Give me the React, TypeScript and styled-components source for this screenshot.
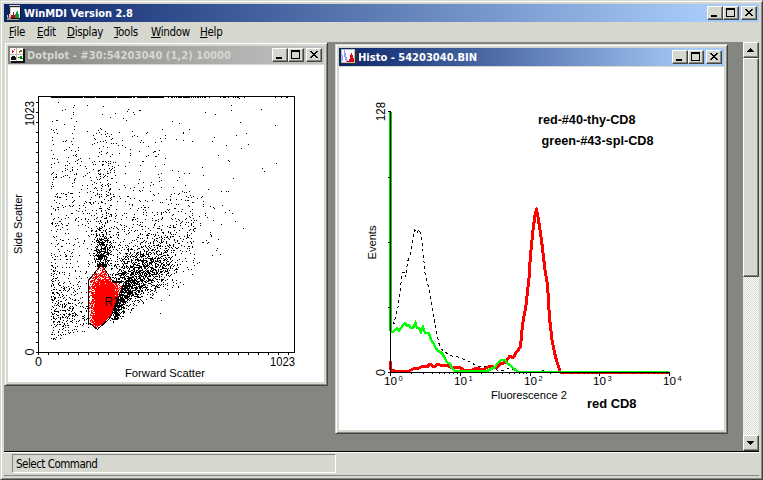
import React from "react";
import styled, { createGlobalStyle, css } from "styled-components";

const FACE = "#d6d7cf";
const SHADOW = "#848682";
const DARK = "#424542";

const GlobalStyle = createGlobalStyle`
  * { box-sizing: border-box; }
  body { margin: 0; background: ${FACE}; overflow: hidden; }
  svg { display: block; }
`;

const AppWindow = styled.div`
  width: 763px;
  height: 480px;
  display: flex;
  flex-direction: column;
  padding: 3px;
  background: ${FACE};
  border: 1px solid;
  border-color: ${FACE} ${DARK} ${DARK} ${FACE};
  box-shadow: inset 1px 1px #fff, inset -1px -1px ${SHADOW};
  font-family: "DejaVu Sans Condensed", "DejaVu Sans", sans-serif;
  font-size: 11px;
  color: #000;
`;

const TitleBar = styled.div<{ $inactive?: boolean }>`
  height: 18px;
  flex: none;
  display: flex;
  align-items: center;
  gap: 2px;
  padding: 0 2px;
  background: ${(p) =>
    p.$inactive
      ? "linear-gradient(90deg, #848482, #c3c3c3)"
      : "linear-gradient(90deg, #0a246a, #a6caf7 92%)"};
  color: ${(p) => (p.$inactive ? FACE : "#fff")};
`;

const TitleText = styled.svg`
  flex: 1;
  height: 18px;
  min-width: 0;
  font: bold 11px "DejaVu Sans Condensed", "DejaVu Sans", sans-serif;
  fill: currentColor;
`;

const raised = css`
  background: ${FACE};
  border: 1px solid;
  border-color: #fff ${DARK} ${DARK} #fff;
  box-shadow: inset -1px -1px ${SHADOW};
`;

const CaptionButtons = styled.div`
  display: flex;
  height: 14px;
`;

const CaptionButton = styled.button<{ $gap?: boolean }>`
  ${raised}
  width: 16px;
  height: 14px;
  padding: 0;
  margin-left: ${(p) => (p.$gap ? 2 : 0)}px;
`;

const MenuBar = styled.div`
  height: 20px;
  flex: none;
  display: flex;
  align-items: center;
  padding-left: 5px;
`;

const MenuItem = styled.span<{ $w: number }>`
  width: ${(p) => p.$w}px;
  font: 11.5px "DejaVu Sans Condensed", "DejaVu Sans", sans-serif;
  letter-spacing: -0.3px;
  line-height: 20px;
  white-space: nowrap;
  u { text-underline-offset: 1px; text-decoration-thickness: 1px; }
`;

const WorkRow = styled.div`
  height: 409px;
  flex: none;
  display: flex;
`;

const Desktop = styled.div`
  position: relative;
  flex: 1;
  background: ${SHADOW};
`;

const ChildWindow = styled.section<{ $x: number; $y: number; $w: number; $h: number }>`
  position: absolute;
  left: ${(p) => p.$x}px;
  top: ${(p) => p.$y}px;
  width: ${(p) => p.$w}px;
  height: ${(p) => p.$h}px;
  display: flex;
  flex-direction: column;
  padding: 3px;
  background: ${FACE};
  border: 1px solid;
  border-color: ${FACE} ${DARK} ${DARK} ${FACE};
  box-shadow: inset 1px 1px #fff, inset -1px -1px ${SHADOW};
`;

const Client = styled.div`
  flex: 1;
  margin-top: 1px;
  background: #fff;
  min-height: 0;
`;

const ScrollBar = styled.div`
  width: 16px;
  display: flex;
  flex-direction: column;
  background: repeating-conic-gradient(${FACE} 0 25%, #fff 0 50%) 0 0 / 2px 2px;
`;

const ScrollButton = styled.button`
  ${raised}
  width: 16px;
  height: 16px;
  padding: 0;
`;

const ScrollThumb = styled.div`
  ${raised}
  height: 219px;
`;

const ScrollTrack = styled.div`
  flex: 1;
`;

const StatusBar = styled.footer`
  height: 25px;
  flex: none;
  padding: 1px 8px 0;
  border-top: 1px solid #000;
  border-bottom: 1px solid ${SHADOW};
  box-shadow: inset 0 1px #fff;
`;

const StatusPane = styled.div`
  width: 324px;
  height: 19px;
  margin-top: 1px;
  padding-left: 3px;
  border: 1px solid;
  border-color: ${SHADOW} #fff #fff ${SHADOW};
  line-height: 18px;
  font-size: 11.5px;
  letter-spacing: -0.5px;
`;

const Plot = styled.svg`
  width: 100%;
  height: 100%;
  font: 11px "Liberation Sans", Arial, sans-serif;
`;

type Pt = [number, number];

function Controls() {
  return (
    <CaptionButtons>
      <CaptionButton>
        <svg width="14" height="12" shapeRendering="crispEdges"><path d="M3 8h6v2H3z" /></svg>
      </CaptionButton>
      <CaptionButton>
        <svg width="14" height="12" shapeRendering="crispEdges">
          <path fillRule="evenodd" d="M2 1h9v9H2z M3 3v6h7V3z" />
        </svg>
      </CaptionButton>
      <CaptionButton $gap>
        <svg width="14" height="12" shapeRendering="crispEdges">
          <path d="M3 2h2v1h1v1h2V3h1V2h2v1h-1v1H9v1H8v1h1v1h1v1h1v1H9V8H8V7H6v1H5v1H3V8h1V7h1V6h1V5H5V4H4V3H3z" />
        </svg>
      </CaptionButton>
    </CaptionButtons>
  );
}

function Caption({ text, w, x, inactive, icon }: { text: string; w: number; x: number; inactive?: boolean; icon: React.ReactNode }) {
  return (
    <TitleBar $inactive={inactive}>
      {icon}
      <TitleText>
        <text x={x} y="13" textLength={w} lengthAdjust="spacingAndGlyphs">{text}</text>
      </TitleText>
      <Controls />
    </TitleBar>
  );
}

const AppIcon = () => (
  <svg width="16" height="17" shapeRendering="crispEdges">
    <path fill="#d6d7cf" d="M3 0h11v13H3z M1 10h4v5H1z" />
    <path fill="none" stroke="#222" d="M3.5 9V1.5h10" />
    <path fill="#a9aaa6" d="M1 13h12v2H1z" />
    <path fill="#222" d="M0 15h13v1H0z M2 9h1v3H2z" />
    <path fill="#848682" d="M1 12h4v2H1z" />
    <path fill="#fff" d="M5 3h9v10H5z" />
    <path fill="#0a9a3a" d="M11 6h1v3h1v4H9V9h1V7h1z" />
    <path fill="#c00020" d="M7 7h1v3h1v3H5v-3h2z" />
    <path fill="#111" d="M5 13h10v1H5z M14 3h1v11h-1z" />
  </svg>
);

const DotIcon = () => (
  <svg width="16" height="16" shapeRendering="crispEdges">
    <path fill="#111" d="M1 2h14v14H1z" />
    <path fill="#fff" d="M0 1h13v13H0z" />
    <path fill="#bbb" d="M6 1h1v13H6z M0 7h13v1H0z" />
    <path fill="#e00" d="M2 3h1v1h1v1H3v1H2z M4 2h1v1H4z" />
    <path fill="#960" d="M9 4h1V3h2v2h-2v1H9z" />
    <path fill="#111" d="M1 10h1V9h3v1h1v3H1z" />
    <path fill="#080" d="M8 10h2v1H8z M10 9h2v2h1v1h-3z" />
  </svg>
);

const HistoIcon = () => (
  <svg width="16" height="16" shapeRendering="crispEdges">
    <path fill="#333" d="M1 1h15v14H1z" />
    <path fill="#bbb" d="M0 0h14v14H0z" />
    <path fill="#fff" d="M1 1h12v12H1z" />
    <path fill="#99f" d="M3 1h1v3h1v4h1v3h1v2H5v-2H4V8H3z M1 6h1v6H1z" />
    <path fill="#e00010" d="M10 4h1v2h1v3h1v4H6v-1h2v-2h1V6h1z" />
  </svg>
);

/** Deterministic generator so the event cloud is the same on every load. */
function makeRandom(seed: number) {
  let a = seed;
  return () => {
    a = (a + 0x6d2b79f5) | 0;
    let t = Math.imul(a ^ (a >>> 15), 1 | a);
    t = (t + Math.imul(t ^ (t >>> 7), 61 | t)) ^ t;
    return ((t ^ (t >>> 14)) >>> 0) / 4294967296;
  };
}

const GATE: Pt[] = [[101, 264], [88, 280], [88, 322], [97, 329], [110, 317], [116, 304], [123, 284], [113, 283], [109, 275]];

function inGate(x: number, y: number) {
  let hit = false;
  for (let i = 0, j = GATE.length - 1; i < GATE.length; j = i++) {
    const [xi, yi] = GATE[i];
    const [xj, yj] = GATE[j];
    if (yi > y !== yj > y && x < ((xj - xi) * (y - yi)) / (yj - yi) + xi) hit = !hit;
  }
  return hit;
}

// Offsets in thirds of a channel from (160, 90).
const SPARSE = [
  213,45,213,60,135,67,166,72,304,58,37,94,58,100,241,97,346,106,7,118,88,118,70,127,70,130,16,136,259,130,
  229,136,163,142,1,145,16,145,49,148,70,151,97,154,157,154,199,166,265,163,244,175,175,196,16,205,205,211,
  208,214,13,223,349,220,127,232,307,235,37,241,55,244,313,244,4,250,73,250,88,250,130,256,58,262,52,271,
  220,265,76,286,40,292,145,298,67,304,79,307,184,304,199,304,205,304,43,310,58,310,94,322,100,319,127,320,
  124,323,85,330,82,330,31,320,31,328,19,328,49,328,112,325,130,335,130,343,130,349,97,337,25,343,1,337,
  151,349,160,352,163,355,187,346,208,361,196,367,217,370,136,370,136,376,118,379,142,382,160,391,226,394,
  184,403,250,415,103,415,106,415,121,401,121,406,151,427,151,433,154,439,175,448,46,355,67,358,76,370,
  100,385,109,391,58,391,64,397,85,409,103,424,88,436,82,442,238,25,151,428,175,448,181,493,169,481,172,475,
  157,496,139,451,142,461,127,458,130,458,145,458,118,517,112,520,103,526,97,553,82,533,85,537,94,537,28,616,
  4,631,1,670,55,592,55,589,61,577,49,580,37,571,154,436,103,492,103,505,88,470,97,472,70,545,
];

function buildEvents() {
  const rnd = makeRandom(30);
  const gauss = () => (rnd() + rnd() + rnd() + rnd() - 2) * 1.7;
  const black: string[] = [];
  const red: string[] = [];
  const put = (fx: number, fy: number) => {
    const x = Math.round(fx);
    const y = Math.round(fy);
    if (x < 51 || x > 292 || y < 98 || y > 341 || inGate(x + 0.5, y + 0.5)) return;
    black.push(`M${x} ${y}h1v1h-1z`);
  };
  for (let i = 0; i < SPARSE.length; i += 2) put(160 + Math.floor(SPARSE[i] / 3), 90 + Math.floor(SPARSE[i + 1] / 3));
  // Thin background, denser toward the bottom.
  for (let i = 0; i < 500; i++) {
    const x = 51 + rnd() * 112;
    const y = 98 + Math.pow(rnd(), 0.62) * 180;
    put(x, y);
  }
  // Debris near the left edge.
  for (let i = 0; i < 190; i++) put(51 + Math.pow(rnd(), 1.6) * 27, 110 + Math.pow(rnd(), 0.7) * 190);
  for (let i = 0; i < 400; i++) {
    const x = 51 + Math.pow(rnd(), 1.4) * 38;
    const y = 314 + gauss() * 20;
    if (y < 340 - (x - 51) * 0.25) put(x, y);
  }
  // Vertical column above the gate.
  for (let i = 0; i < 240; i++) put(102 + gauss() * 7, 124 + Math.pow(rnd(), 0.65) * 135);
  for (let i = 0; i < 330; i++) put(101.5 + gauss() * 3.8, 222 + Math.pow(rnd(), 0.55) * 45);
  // Diagonal cloud, thinning away from the gate.
  for (let i = 0; i < 1650; i++) {
    const t = Math.min(rnd(), 0.25 + rnd());
    const x = 112 + t * 58 + gauss() * 10;
    const y = 292 - (x - 112) * 0.6 + gauss() * 14;
    if (x > 108 && y < 325 - (x - 110) * 0.6 + gauss() * 3 && y > 205) put(x, y);
  }
  for (let i = 0; i < 380; i++) {
    const x = 108 + Math.pow(rnd(), 0.85) * 86;
    const y = 258 - (x - 108) * 0.42 + gauss() * 22;
    if (y > 190) put(x, y);
  }
  // Dense right edge of the gate.
  for (let i = 0; i < 330; i++) {
    const y = 281 + rnd() * 38;
    put(124 - (y - 283) * 0.36 + Math.abs(gauss()) * 4, y);
  }
  // Saturated events along the upper limit.
  for (let x = 51; x < 293; x++) {
    const p = x < 162 ? 0.91 : x < 200 ? 0.67 : x < 245 ? 0.3 : 0.08;
    if (rnd() < p) black.push(`M${x} 97h1v1h-1z`);
  }
  for (let y = 264; y < 330; y++) {
    for (let x = 88; x < 125; x++) {
      if (!inGate(x + 0.5, y + 0.5)) continue;
      const top = Math.min(1, (y - 254) / 32);
      const side = Math.min(1, (x - 86) / 10);
      const right = y < 296 ? Math.min(1, (125 - x) / 17 + 0.2) : 1;
      const low = Math.min(1, (334 - y) / 12);
      const p = 0.02 + top * side * right * low * 1.0;
      if (rnd() < p) red.push(`M${x} ${y}h1v1h-1z`);
    }
  }
  return { black: black.join(""), red: red.join("") };
}

const EVENTS = buildEvents();

function range(n: number) {
  return Array.from({ length: n }, (_, i) => i);
}

interface LabelProps { x: number; y: number; w: number; up?: boolean; size?: number; children: string }

function Label({ x, y, w, up, size = 11, children }: LabelProps) {
  return (
    <text
      x={up ? 0 : x}
      y={up ? 0 : y}
      transform={up ? `translate(${x} ${y}) rotate(-90)` : undefined}
      fontSize={size}
      textLength={w}
      lengthAdjust="spacingAndGlyphs"
    >
      {children}
    </text>
  );
}

function DotPlot() {
  const ticks = range(25).map((i) => `M${48 + i * 10} 353h1v2h-1z M36 ${342 - i * 10}h2v1h-2z`).join("");
  return (
    <Plot viewBox="8 65 316 317">
      <g shapeRendering="crispEdges">
        <path d={EVENTS.red} fill="#f00" />
        <path d={EVENTS.black} />
        <path d="M101.5 264.5L88.5 280.5V322.5L97.5 329.5L110.5 317.5L123.5 284.5M101.5 264.5L113.5 282.5" fill="none" stroke="#000" />
        <path d="M99 256h4v3h-4z M113 281h9v2h-9z" />
        <path fillRule="evenodd" d="M38 96h257v257H38z M39 97v255h255V97z" />
        <path d={ticks + "M38 353h1v2h-1z M36 352h2v1h-2z"} />
      </g>
      <Label x={104.5} y={306} w={15} size={13}>R1</Label>
      <Label x={34} y={126} w={25} up size={12}>1023</Label>
      <Label x={34} y={355.5} w={7} up size={12}>0</Label>
      <Label x={21.5} y={254} w={60} up size={11.5}>Side Scatter</Label>
      <Label x={35} y={365.5} w={7} size={12}>0</Label>
      <Label x={270} y={365.5} w={25} size={12}>1023</Label>
      <Label x={125} y={377} w={80} size={11.5}>Forward Scatter</Label>
    </Plot>
  );
}

const CONTROL = "390,323 392,320 394,324 396,314 398,307 400,291 402.5,272 404,272 405.5,277 407.5,262 410,255 412.5,243 414.5,230 417,233 419.5,229 422.5,245 425,273 428.5,287 432,307 436,330 440,348 445,352 451.5,356 458,357 468,361 477,366 487,367 493,367 497,370 503,371 509,368 516,371 540,371 542,370 544,371";
const GREEN = "390,331 393,332 395,330 397,328 399,331 401,328 403,325 405,323 407,326 409,325 411,328 413,328 415.5,323 417,328 419,328 421,332 423,327 425,333 429,333 431,340 434,344 435,347 438,351 442,353 444,357 447,362 450,364 452,368 455,371 487,371 491,369 495,367 497,364 501,360 505,360 507,363 511,366 514,369 517.5,371";
const RED = "390.5,361 391,370 396,371.5 409,371 413,369 419,368 423,366 427,367 430,364 434,367 438,364 442,366 447,365 452,368 459,367 464,370 472,370 477,368 482,370 488,367 492,366 496,368 500,364 504,363 507,360 510,356 513,358 516.5,352 520.5,347 522.5,325 526,305 529,278 530.5,255 533,230 535,215 536.5,209 538.5,220 541.5,240 545,270 547.5,285 549.5,318 552,340 555.5,357 559,368 560,373";

function Histogram() {
  const minor = range(4)
    .flatMap((d) => [2, 3, 4, 5, 6, 7, 8, 9].map((n) => Math.round(390 + 69.75 * (d + Math.log10(n)))))
    .map((x) => `M${x} 373h1v1h-1z`)
    .join("");
  const decades = range(5).map((d) => Math.round(390 + d * 69.75));
  return (
    <Plot viewBox="339 67 385 363">
      <g fill="none" shapeRendering="crispEdges">
        <polyline points={CONTROL} stroke="#000" strokeDasharray="3 3" />
        <polyline points={RED} stroke="#f00" strokeWidth="3" strokeLinejoin="round" />
        <path d="M390.5 112v219" stroke="#00d800" strokeWidth="3" />
        <polyline points={GREEN} stroke="#0f0" strokeWidth="2.4" />
      </g>
      <g shapeRendering="crispEdges">
        <path d="M516 371h153v1H516z" fill="#0f0" />
        <path d="M560 373h109v1H560z" fill="#f00" />
        <path d="M390 111h1v262h-1z M390 372h280v1H390z" />
        <path d={[111, 177, 242, 307, 372].map((y) => `M388 ${y}h2v1h-2z`).join("") + minor} />
        <path d={decades.map((x) => `M${x} 373h1v3h-1z`).join("")} />
      </g>
      {decades.map((x, i) => (
        <g key={x}>
          <Label x={x - 6} y={385} w={13} size={11.5}>10</Label>
          <Label x={x + 8.5} y={380.5} w={4.2} size={8}>{String(i)}</Label>
        </g>
      ))}
      <Label x={385} y={121} w={19} up size={12}>128</Label>
      <Label x={385} y={376} w={7} up size={12}>0</Label>
      <Label x={376} y={259.5} w={34} up size={11.5}>Events</Label>
      <Label x={491} y={399} w={76} size={11.5}>Fluorescence 2</Label>
      <g fontWeight="bold">
        <Label x={538} y={123.5} w={97.5} size={12}>red-#40-thy-CD8</Label>
        <Label x={541.5} y={144.5} w={112} size={12}>green-#43-spl-CD8</Label>
        <Label x={587} y={407.5} w={49.5} size={12}>red CD8</Label>
      </g>
    </Plot>
  );
}

const MENUS: [string, number][] = [["File", 28], ["Edit", 30], ["Display", 47], ["Tools", 37], ["Window", 49], ["Help", 30]];

export default function App() {
  return (
    <>
      <GlobalStyle />
      <AppWindow>
        <Caption text="WinMDI Version 2.8" x={0} w={109} icon={<AppIcon />} />
        <MenuBar>
          {MENUS.map(([name, w]) => (
            <MenuItem key={name} $w={w}><u>{name[0]}</u>{name.slice(1)}</MenuItem>
          ))}
        </MenuBar>
        <WorkRow>
          <Desktop>
            <ChildWindow $x={0} $y={0} $w={324} $h={344}>
              <Caption inactive text="Dotplot - #30:54203040 (1,2) 10000" x={-1} w={204} icon={<DotIcon />} />
              <Client><DotPlot /></Client>
            </ChildWindow>
            <ChildWindow $x={331} $y={2} $w={393} $h={390}>
              <Caption text="Histo - 54203040.BIN" x={-1} w={119} icon={<HistoIcon />} />
              <Client><Histogram /></Client>
            </ChildWindow>
          </Desktop>
          <ScrollBar>
            <ScrollButton>
              <svg width="14" height="14" shapeRendering="crispEdges"><path d="M6 5h1v1h1v1h1v1h1v1H3V8h1V7h1V6h1z" /></svg>
            </ScrollButton>
            <ScrollThumb />
            <ScrollTrack />
            <ScrollButton>
              <svg width="14" height="14" shapeRendering="crispEdges"><path d="M3 5h7v1H9v1H8v1H7v1H6V8H5V7H4V6H3z" /></svg>
            </ScrollButton>
          </ScrollBar>
        </WorkRow>
        <StatusBar>
          <StatusPane>Select Command</StatusPane>
        </StatusBar>
      </AppWindow>
    </>
  );
}
